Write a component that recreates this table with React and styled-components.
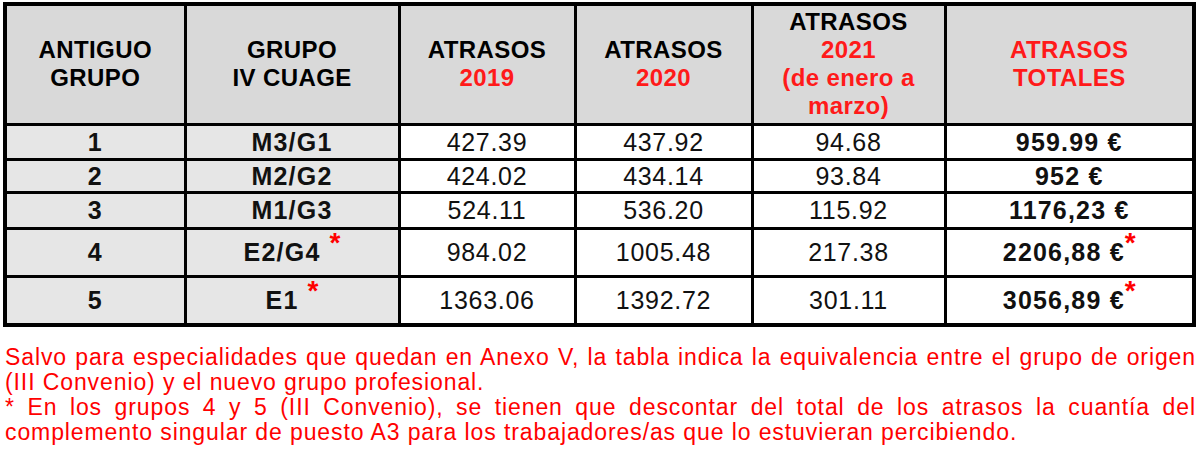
import React from 'react'
import styled, { createGlobalStyle } from 'styled-components'

const GlobalStyle = createGlobalStyle`
  html, body {
    margin: 0;
    padding: 0;
    background: #fff;
  }
  body {
    font-family: "Liberation Sans", Arial, sans-serif;
  }
`

const columns = [180, 214, 176, 177, 193, 249]

const rows = [
  { antiguo: '1', cuage: 'M3/G1', y19: '427.39', y20: '437.92', y21: '94.68', total: '959.99 €', h: 35 },
  { antiguo: '2', cuage: 'M2/G2', y19: '424.02', y20: '434.14', y21: '93.84', total: '952 €', h: 33 },
  { antiguo: '3', cuage: 'M1/G3', y19: '524.11', y20: '536.20', y21: '115.92', total: '1176,23 €', h: 36 },
  { antiguo: '4', cuage: 'E2/G4', y19: '984.02', y20: '1005.48', y21: '217.38', total: '2206,88 €', h: 48, star: true },
  { antiguo: '5', cuage: 'E1', y19: '1363.06', y20: '1392.72', y21: '301.11', total: '3056,89 €', h: 49, star: true },
]

const App = () => {
  return (
    <>
      <GlobalStyle />
      <Page>
        <Table>
          <colgroup>
            {columns.map((w, i) => <col key={i} style={{ width: w }} />)}
          </colgroup>
          <thead>
            <Row $h={120}>
              <HeadCell>ANTIGUO<br />GRUPO</HeadCell>
              <HeadCell>GRUPO<br />IV CUAGE</HeadCell>
              <HeadCell>ATRASOS<br /><Red>2019</Red></HeadCell>
              <HeadCell>ATRASOS<br /><Red>2020</Red></HeadCell>
              <HeadCell>ATRASOS<br /><Red>2021<br />(de enero a<br />marzo)</Red></HeadCell>
              <HeadCell><Red>ATRASOS<br />TOTALES</Red></HeadCell>
            </Row>
          </thead>
          <tbody>
            {rows.map(r => (
              <Row key={r.antiguo} $h={r.h}>
                <Cell $shade $bold>{r.antiguo}</Cell>
                <Cell $shade $bold>
                  {r.cuage}
                  {r.star && <Star $gap>*</Star>}
                </Cell>
                <Cell>{r.y19}</Cell>
                <Cell>{r.y20}</Cell>
                <Cell>{r.y21}</Cell>
                <Cell $bold>
                  {r.total}
                  {r.star && <Star>*</Star>}
                </Cell>
              </Row>
            ))}
          </tbody>
        </Table>
        <Notes>
          <Note>
            Salvo para especialidades que quedan en Anexo V, la tabla indica la equivalencia entre el grupo de origen
            (III Convenio) y el nuevo grupo profesional.
          </Note>
          <Note>
            * En los grupos 4 y 5 (III Convenio), se tienen que descontar del total de los atrasos la cuantía del
            complemento singular de puesto A3 para los trabajadores/as que lo estuvieran percibiendo.
          </Note>
        </Notes>
      </Page>
    </>
  )
}

export default App

const Page = styled.div`
  width: 1193px;
  padding: 2px 4px 0 3px;
  display: flex;
  flex-direction: column;
  gap: 18px;
`

const Table = styled.table`
  width: 1193px;
  table-layout: fixed;
  border-collapse: collapse;
  border: 4px solid #000;
`

const Row = styled.tr`
  height: ${props => props.$h}px;
`

const HeadCell = styled.th`
  border: 3px solid #000;
  background: #d9d9d9;
  color: #000;
  font-size: 24px;
  font-weight: 700;
  line-height: 28px;
  letter-spacing: 0.4px;
  text-align: center;
  vertical-align: middle;
  padding: 0;
`

const Cell = styled.td`
  border: 3px solid #000;
  background: ${props => props.$shade ? '#e6e6e6' : '#fff'};
  color: #111;
  font-size: 25px;
  font-weight: ${props => props.$bold ? 700 : 400};
  letter-spacing: ${props => props.$bold ? '1.2px' : '0.7px'};
  line-height: 28px;
  text-align: center;
  vertical-align: middle;
  padding: 0;
`

const Red = styled.span`
  color: #ff1a1a;
`

const Star = styled.span`
  color: #ff0000;
  font-weight: 700;
  font-size: 28px;
  vertical-align: super;
  line-height: 0;
  margin-left: ${props => props.$gap ? '9px' : '0'};
  letter-spacing: 0;
`

const Notes = styled.div`
  display: flex;
  flex-direction: column;
  padding: 0 0 0 2px;
`

const Note = styled.p`
  margin: 0;
  color: #ff0000;
  font-size: 23px;
  letter-spacing: 0.9px;
  line-height: 25px;
  text-align: justify;
`
